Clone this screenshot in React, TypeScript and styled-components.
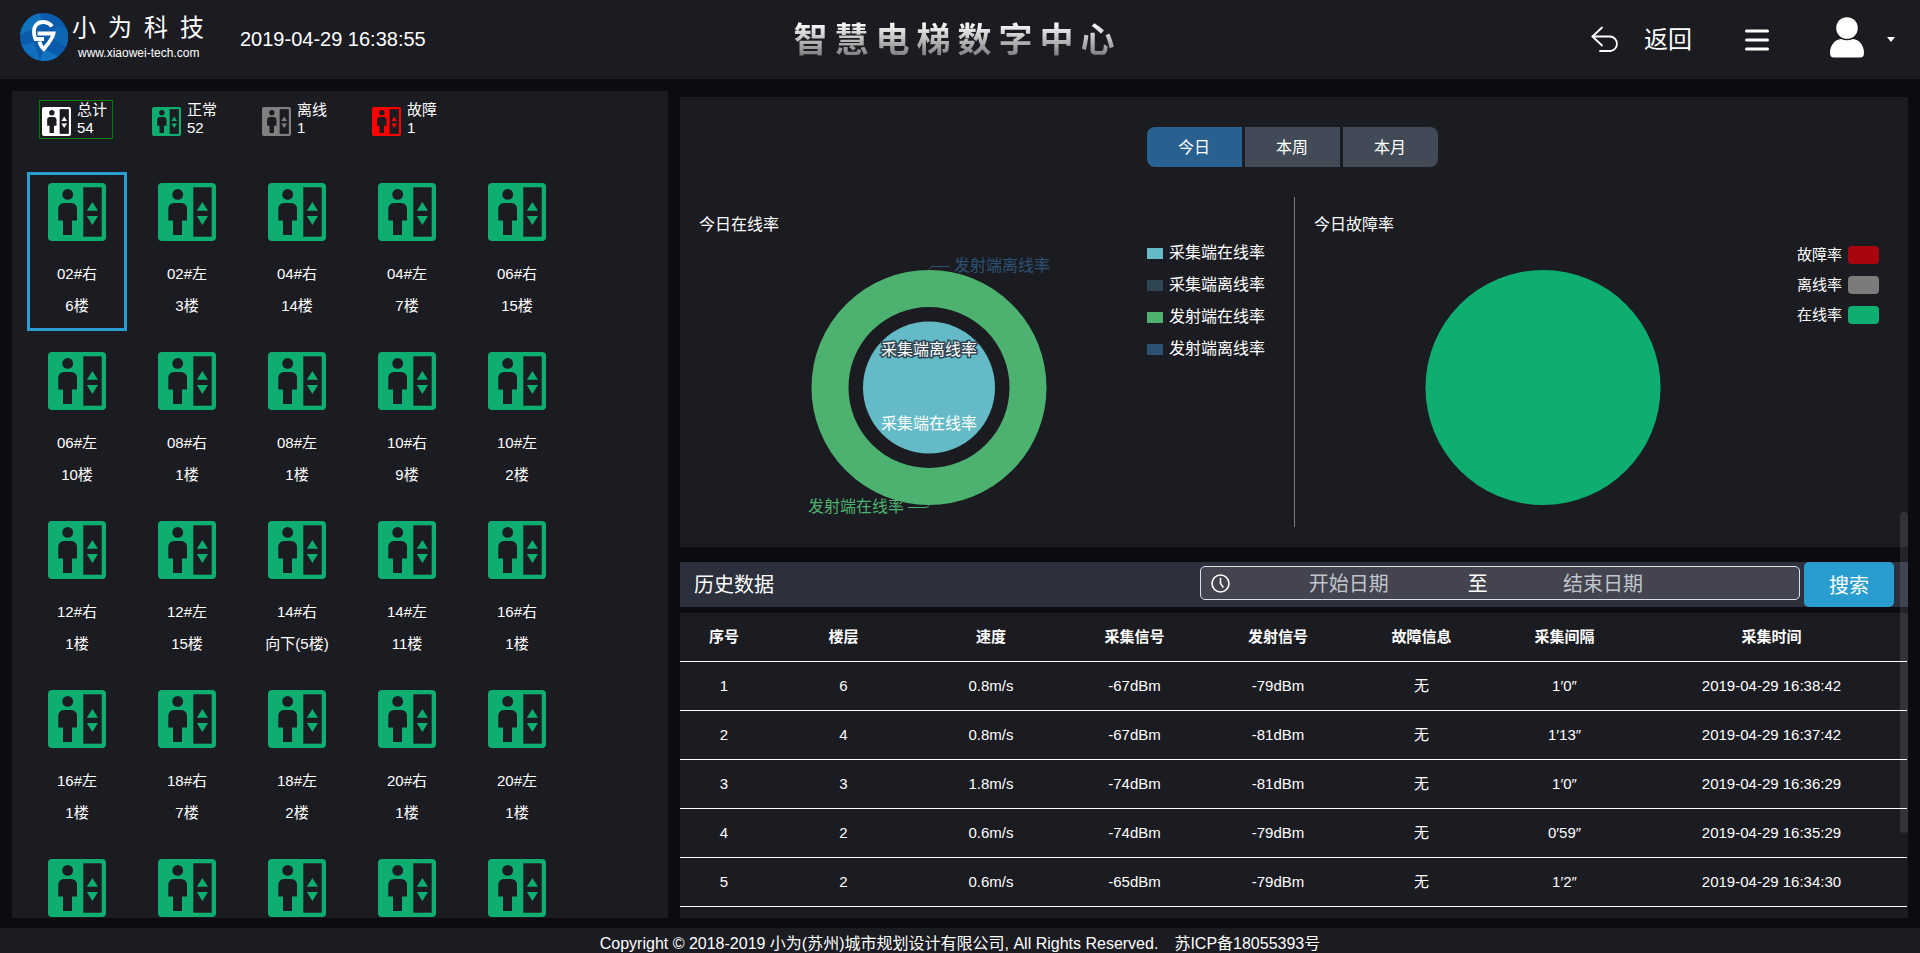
import React, { useState } from 'react';
import styled, { createGlobalStyle } from 'styled-components';

const color = {
  page: '#0c0b10',
  panel: '#1b1c21',
  bar: '#2c303d',
  accent: '#2a9dd0',
  online: '#0eae70',
};

const GlobalStyle = createGlobalStyle`
  * { box-sizing: border-box; }
  body {
    margin: 0;
    background: ${color.page};
    color: #fff;
    font-family: "Liberation Sans", "Noto Sans CJK SC", sans-serif;
    font-size: 15px;
  }
  button, input { font: inherit; color: inherit; }
  button { cursor: pointer; }
`;

const Page = styled.div`
  display: flex;
  flex-direction: column;
  height: 100vh;
  overflow: hidden;
`;

const Header = styled.header`
  display: grid;
  grid-template-columns: 1fr auto 1fr;
  align-items: center;
  flex: none;
  height: 79px;
  padding: 0 25px 0 20px;
  background: ${color.panel};
`;

const HeaderStart = styled.div`
  display: flex;
  align-items: center;
  padding-bottom: 4px;
`;

const Brand = styled.a`
  display: flex;
  gap: 4px;
  width: 220px;
  color: #fff;
  text-decoration: none;
`;

const BrandText = styled.span`
  display: flex;
  flex-direction: column;
`;

const BrandName = styled.span`
  font-size: 24px;
  line-height: 30px;
  letter-spacing: 12px;
  white-space: nowrap;
`;

const BrandSite = styled.span`
  padding-left: 6px;
  font-size: 12px;
  line-height: 20px;
`;

const Clock = styled.time`
  padding-top: 2px;
  font-size: 20px;
  line-height: 24px;
`;

const Title = styled.h1`
  margin: 0;
  font-size: 34px;
  line-height: 44px;
  font-weight: 700;
  letter-spacing: 7px;
  color: transparent;
  background: linear-gradient(#fff 10%, #777 90%);
  background-clip: text;
  -webkit-background-clip: text;
`;

const HeaderEnd = styled.nav`
  display: flex;
  align-items: center;
  justify-content: flex-end;
`;

const IconButton = styled.button`
  display: flex;
  align-items: center;
  padding: 0;
  border: 0;
  background: none;
`;

const BackButton = styled(IconButton)`
  gap: 25px;
  margin-right: 53px;
  font-size: 24px;
  line-height: 32px;
`;

const UserButton = styled(IconButton)`
  gap: 22px;
  margin-left: 60px;
`;

const Main = styled.main`
  display: grid;
  grid-template-columns: 164fr 307fr;
  grid-template-rows: minmax(0, 1fr);
  gap: 12px;
  flex: 1;
  min-height: 0;
  padding: 12px 12px 10px;
`;

const Elevators = styled.section`
  padding: 9px 10px 0;
  background: ${color.panel};
  overflow: hidden;
`;

const Stats = styled.div`
  display: flex;
  gap: 36px;
  padding-left: 17px;
`;

const Stat = styled.button<{ $selected?: boolean }>`
  display: flex;
  align-items: flex-end;
  gap: 6px;
  width: 74px;
  height: 39px;
  padding: 0 2px 1px;
  border: 1px solid ${(p) => (p.$selected ? 'green' : 'transparent')};
  background: none;
  line-height: 18px;
  text-align: left;
  white-space: nowrap;

  svg { margin-bottom: 1px; }
`;

const Line = styled.span`
  display: block;
`;

const CarGrid = styled.div`
  display: grid;
  grid-template-columns: repeat(5, 100px);
  gap: 10px;
  padding: 33px 5px 0;
`;

const Car = styled.button<{ $selected?: boolean }>`
  display: flex;
  flex-direction: column;
  align-items: center;
  height: 159px;
  padding: 8px 0 0;
  border: 3px solid ${(p) => (p.$selected ? color.accent : 'transparent')};
  background: none;
  line-height: 32px;
  white-space: nowrap;

  svg { margin-bottom: 17px; flex: none; }
`;

const Side = styled.div`
  position: relative;
  display: flex;
  flex-direction: column;
  min-width: 0;
  padding-top: 6px;
  overflow: hidden;
`;

const ScrollThumb = styled.div`
  position: absolute;
  right: 0;
  top: 421px;
  width: 8px;
  height: 321px;
  border-radius: 4px;
  background: rgba(255, 255, 255, 0.1);
`;

const Charts = styled.section`
  display: flex;
  flex-direction: column;
  flex: none;
  height: 450px;
  padding: 30px 0 20px;
  background: ${color.panel};
`;

const Tabs = styled.div`
  display: flex;
  justify-content: center;
  gap: 3px;
  margin-bottom: 30px;
  padding-right: 4px;
`;

const Tab = styled.button<{ $active?: boolean }>`
  width: 95px;
  height: 40px;
  padding: 0 0 2px;
  border: 0;
  background: ${(p) => (p.$active ? '#28618f' : '#414a56')};
  font-size: 16px;

  &:first-child { border-radius: 8px 0 0 8px; }
  &:last-child { border-radius: 0 8px 8px 0; }
`;

const ChartRow = styled.div`
  display: grid;
  grid-template-columns: 1fr 1fr;
  height: 330px;
`;

const ChartBox = styled.article`
  position: relative;
  display: flex;
  justify-content: center;
  & + & { border-left: 1px solid #7d7d80; }
`;

const ChartTitle = styled.h2`
  position: absolute;
  left: 19px;
  top: 16px;
  margin: 0;
  font-size: 16px;
  line-height: 24px;
  font-weight: 400;
`;

const Plot = styled.svg`
  flex: none;
  margin-right: 117px;
`;

const Legend = styled.ul`
  position: absolute;
  right: 29px;
  top: 40px;
  margin: 0;
  padding: 0;
  list-style: none;
  font-size: 16px;
  line-height: 32px;
`;

const LegendItem = styled.li<{ $fill: string }>`
  display: flex;
  align-items: center;
  gap: 6px;

  &::before {
    content: '';
    width: 16px;
    height: 11px;
    background: ${(p) => p.$fill};
  }
`;

const PillLegend = styled(Legend)`
  top: 43px;
  font-size: 15px;
  line-height: 30px;
`;

const PillItem = styled.li<{ $fill: string }>`
  display: flex;
  align-items: center;
  gap: 6px;

  &::after {
    content: '';
    width: 31px;
    height: 18px;
    border-radius: 4px;
    background: ${(p) => p.$fill};
  }
`;

const HistoryBar = styled.form`
  display: flex;
  align-items: center;
  flex: none;
  height: 45px;
  margin: 15px 0 6px;
  padding: 0 14px;
  background: ${color.bar};
  font-size: 20px;
`;

const HistoryTitle = styled.h2`
  flex: 1;
  margin: 0;
  padding-bottom: 2px;
  font-size: 20px;
  font-weight: 400;
`;

const DateRange = styled.div`
  display: flex;
  align-items: center;
  width: 600px;
  height: 34px;
  margin: 0 4px 4px 0;
  padding: 0 10px;
  border: 1px solid #dcdfe6;
  border-radius: 5px;
  background: #43444f;

  svg { flex: none; margin: 2px 6px 0 0; }
`;

const DateInput = styled.input`
  width: 39%;
  height: 32px;
  padding: 4px 0 0;
  border: 0;
  outline: 0;
  background: none;
  text-align: center;

  &::placeholder { color: #c0c4cc; opacity: 1; }
`;

const DateSeparator = styled.span`
  width: 5%;
  padding-left: 4px;
  text-align: center;
`;

const SearchButton = styled.button`
  align-self: stretch;
  width: 90px;
  border: 0;
  border-radius: 5px;
  background: ${color.accent};
`;

const TablePanel = styled.section`
  flex: 1;
  min-height: 0;
  overflow: hidden;
  padding-right: 1px;
  background: ${color.panel};
`;

const Table = styled.table`
  width: 100%;
  table-layout: fixed;
  border-collapse: separate;
  border-spacing: 0;
  text-align: center;

  th, td {
    height: 49px;
    padding: 0;
    border-bottom: 1px solid #fff;
    line-height: 20px;
  }
`;

const Footer = styled.footer`
  display: flex;
  justify-content: center;
  gap: 16px;
  flex: none;
  height: 25px;
  padding-top: 4px;
  background: ${color.panel};
  font-size: 16px;
  line-height: 24px;
  white-space: nowrap;
`;

const FooterLink = styled.a`
  color: #fff;
  text-decoration: none;
`;

function ElevatorIcon({ size, fill }: { size: number; fill: string }) {
  return (
    <svg width={size} height={size} viewBox="0 0 58 58" aria-hidden="true">
      <rect width="58" height="58" rx="4" fill={fill} />
      <g fill={color.panel}>
        <circle cx="19.7" cy="11.4" r="5.4" />
        <path d="M16 20H23Q29 20 29 26.5V37.5H24V52H15V37.5H10.3V26.5Q10.3 20 16 20Z" />
        <rect x="35.3" y="4.3" width="18.4" height="49.4" />
      </g>
      <path d="M44.4 19L50 27.8H38.8ZM38.8 33H50L44.4 42Z" fill={fill} />
    </svg>
  );
}

function BrandLogo() {
  return (
    <svg width="48" height="48" viewBox="0 0 48 48" aria-hidden="true">
      <circle cx="24" cy="24" r="24" fill="#0a5bab" />
      <path d="M6 8A24 24 0 0 1 20 .3L22 12L0 22Q1 14 6 8Z" fill="#0f72bd" />
      <path d="M36 12L47 16A24 24 0 0 1 46 34L34 26Z" fill="#0c66b4" />
      <path d="M2 32L14 30L20 47.6Q7 45 2 32Z" fill="#0f6fbc" />
      <path d="M24 36L38 43.5A24 24 0 0 1 20 47.6Z" fill="#1275c2" />
      <g fill="none" stroke="#fff" strokeWidth="3.8">
        <path d="M32 13.500C29 8.500 20.500 7.500 16.500 11.500C13 15 13.500 21.500 15.500 26H24" />
        <path d="M17.500 20.500H33.500C32.500 26 28 31 23.800 36C21.500 34 20 31.500 19.500 28.500" />
      </g>
    </svg>
  );
}

const stats = [
  { label: '总计', count: 54, fill: '#ffffff' },
  { label: '正常', count: 52, fill: color.online },
  { label: '离线', count: 1, fill: '#808080' },
  { label: '故障', count: 1, fill: '#ff0000' },
];

const cars: { name?: string; floor?: string }[] = [
  { name: '02#右', floor: '6楼' },
  { name: '02#左', floor: '3楼' },
  { name: '04#右', floor: '14楼' },
  { name: '04#左', floor: '7楼' },
  { name: '06#右', floor: '15楼' },
  { name: '06#左', floor: '10楼' },
  { name: '08#右', floor: '1楼' },
  { name: '08#左', floor: '1楼' },
  { name: '10#右', floor: '9楼' },
  { name: '10#左', floor: '2楼' },
  { name: '12#右', floor: '1楼' },
  { name: '12#左', floor: '15楼' },
  { name: '14#右', floor: '向下(5楼)' },
  { name: '14#左', floor: '11楼' },
  { name: '16#右', floor: '1楼' },
  { name: '16#左', floor: '1楼' },
  { name: '18#右', floor: '7楼' },
  { name: '18#左', floor: '2楼' },
  { name: '20#右', floor: '1楼' },
  { name: '20#左', floor: '1楼' },
  {}, {}, {}, {}, {},
];

const columns = [
  { label: '序号', width: 88 },
  { label: '楼层', width: 151 },
  { label: '速度', width: 144 },
  { label: '采集信号', width: 143 },
  { label: '发射信号', width: 144 },
  { label: '故障信息', width: 143 },
  { label: '采集间隔', width: 143 },
  { label: '采集时间', width: 271 },
];

const history = [
  ['1', '6', '0.8m/s', '-67dBm', '-79dBm', '无', '1′0″', '2019-04-29 16:38:42'],
  ['2', '4', '0.8m/s', '-67dBm', '-81dBm', '无', '1′13″', '2019-04-29 16:37:42'],
  ['3', '3', '1.8m/s', '-74dBm', '-81dBm', '无', '1′0″', '2019-04-29 16:36:29'],
  ['4', '2', '0.6m/s', '-74dBm', '-79dBm', '无', '0′59″', '2019-04-29 16:35:29'],
  ['5', '2', '0.6m/s', '-65dBm', '-79dBm', '无', '1′2″', '2019-04-29 16:34:30'],
];

const ranges = ['今日', '本周', '本月'];

export default function App() {
  const [stat, setStat] = useState(0);
  const [car, setCar] = useState(0);
  const [range, setRange] = useState(0);

  return (
    <Page>
      <GlobalStyle />
      <Header>
        <HeaderStart>
          <Brand href="#">
            <BrandLogo />
            <BrandText>
              <BrandName>小为科技</BrandName>
              <BrandSite>www.xiaowei-tech.com</BrandSite>
            </BrandText>
          </Brand>
          <Clock>2019-04-29 16:38:55</Clock>
        </HeaderStart>
        <Title>智慧电梯数字中心</Title>
        <HeaderEnd>
          <BackButton type="button">
            <svg width="28" height="28" viewBox="0 0 28 28" fill="none" stroke="#fff" strokeWidth="1.8" strokeLinecap="round" strokeLinejoin="round" aria-hidden="true">
              <path d="M11 1.500L1.500 10.500L11 19.500" />
              <path d="M1.500 10.500H19.500A7.300 7.300 0 0 1 19.500 25H9" />
            </svg>
            返回
          </BackButton>
          <IconButton type="button" aria-label="菜单">
            <svg width="24" height="24" viewBox="0 0 24 24" stroke="#fff" strokeWidth="3" strokeLinecap="round" aria-hidden="true">
              <path d="M1.500 3H22.500M1.500 12H22.500M1.500 21H22.500" />
            </svg>
          </IconButton>
          <UserButton type="button" aria-label="用户">
            <svg width="36" height="46" viewBox="0 0 36 46" fill="#fff" aria-hidden="true">
              <circle cx="18" cy="11" r="10.800" />
              <path d="M1 36C1 28 6 22.500 12 22Q18 24.500 24 22C30 22.500 35 28 35 36Q35 40.500 31 40.500H5Q1 40.500 1 36Z" />
            </svg>
            <svg width="8" height="5" viewBox="0 0 8 5" fill="#fff" aria-hidden="true">
              <path d="M0 0H8L4 5Z" />
            </svg>
          </UserButton>
        </HeaderEnd>
      </Header>

      <Main>
        <Elevators>
          <Stats>
            {stats.map((s, i) => (
              <Stat key={s.label} type="button" $selected={i === stat} onClick={() => setStat(i)}>
                <ElevatorIcon size={29} fill={s.fill} />
                <span>
                  <Line>{s.label}</Line>
                  <Line>{s.count}</Line>
                </span>
              </Stat>
            ))}
          </Stats>
          <CarGrid>
            {cars.map((c, i) => (
              <Car key={i} type="button" $selected={i === car} onClick={() => setCar(i)}>
                <ElevatorIcon size={58} fill={color.online} />
                {c.name && <Line>{c.name}</Line>}
                {c.floor && <Line>{c.floor}</Line>}
              </Car>
            ))}
          </CarGrid>
        </Elevators>

        <Side>
          <Charts>
            <Tabs>
              {ranges.map((r, i) => (
                <Tab key={r} type="button" $active={i === range} onClick={() => setRange(i)}>
                  {r}
                </Tab>
              ))}
            </Tabs>
            <ChartRow>
              <ChartBox>
                <ChartTitle>今日在线率</ChartTitle>
                <Plot width="260" height="330" viewBox="0 0 260 330" fontSize="16" overflow="visible">
                  <circle cx="130" cy="190.500" r="99" fill="none" stroke="#4db270" strokeWidth="37" />
                  <circle cx="130" cy="190.500" r="66" fill="#64bac6" />
                  <path d="M130 72.500L132.500 69.500H151" fill="none" stroke="#2c5273" />
                  <path d="M130 308.500L127.500 310.500H109" fill="none" stroke="#4db270" />
                  <text x="155" y="74" fill="#2c5273">发射端离线率</text>
                  <text x="105" y="315" fill="#4db270" textAnchor="end">发射端在线率</text>
                  <text x="130" y="158" fill="#fff" stroke="#2f4554" strokeWidth="3" paintOrder="stroke" textAnchor="middle">采集端离线率</text>
                  <text x="130" y="232" fill="#fff" textAnchor="middle">采集端在线率</text>
                </Plot>
                <Legend>
                  <LegendItem $fill="#64bac6">采集端在线率</LegendItem>
                  <LegendItem $fill="#2f4554">采集端离线率</LegendItem>
                  <LegendItem $fill="#4db270">发射端在线率</LegendItem>
                  <LegendItem $fill="#2c5273">发射端离线率</LegendItem>
                </Legend>
              </ChartBox>
              <ChartBox>
                <ChartTitle>今日故障率</ChartTitle>
                <Plot width="260" height="330" viewBox="0 0 260 330">
                  <circle cx="130" cy="190.500" r="117.500" fill={color.online} />
                </Plot>
                <PillLegend>
                  <PillItem $fill="#a9050f">故障率</PillItem>
                  <PillItem $fill="#7b7b7b">离线率</PillItem>
                  <PillItem $fill={color.online}>在线率</PillItem>
                </PillLegend>
              </ChartBox>
            </ChartRow>
          </Charts>

          <HistoryBar onSubmit={(e) => e.preventDefault()}>
            <HistoryTitle>历史数据</HistoryTitle>
            <DateRange>
              <svg width="19" height="19" viewBox="0 0 19 19" fill="none" stroke="#fff" strokeWidth="1.600" strokeLinecap="round" aria-hidden="true">
                <circle cx="9.500" cy="9.500" r="8.500" />
                <path d="M9.500 4.500V9.500L12 13" />
              </svg>
              <DateInput type="text" placeholder="开始日期" aria-label="开始日期" />
              <DateSeparator>至</DateSeparator>
              <DateInput type="text" placeholder="结束日期" aria-label="结束日期" />
            </DateRange>
            <SearchButton type="submit">搜索</SearchButton>
          </HistoryBar>

          <TablePanel>
            <Table>
              <colgroup>
                {columns.map((c) => (
                  <col key={c.label} width={c.width} />
                ))}
              </colgroup>
              <thead>
                <tr>
                  {columns.map((c) => (
                    <th key={c.label} scope="col">{c.label}</th>
                  ))}
                </tr>
              </thead>
              <tbody>
                {history.map((row) => (
                  <tr key={row[0]}>
                    {row.map((cell, i) => (
                      <td key={columns[i].label}>{cell}</td>
                    ))}
                  </tr>
                ))}
              </tbody>
            </Table>
          </TablePanel>
          <ScrollThumb />
        </Side>
      </Main>

      <Footer>
        <span>Copyright © 2018-2019 小为(苏州)城市规划设计有限公司, All Rights Reserved.</span>
        <FooterLink href="#">苏ICP备18055393号</FooterLink>
      </Footer>
    </Page>
  );
}
